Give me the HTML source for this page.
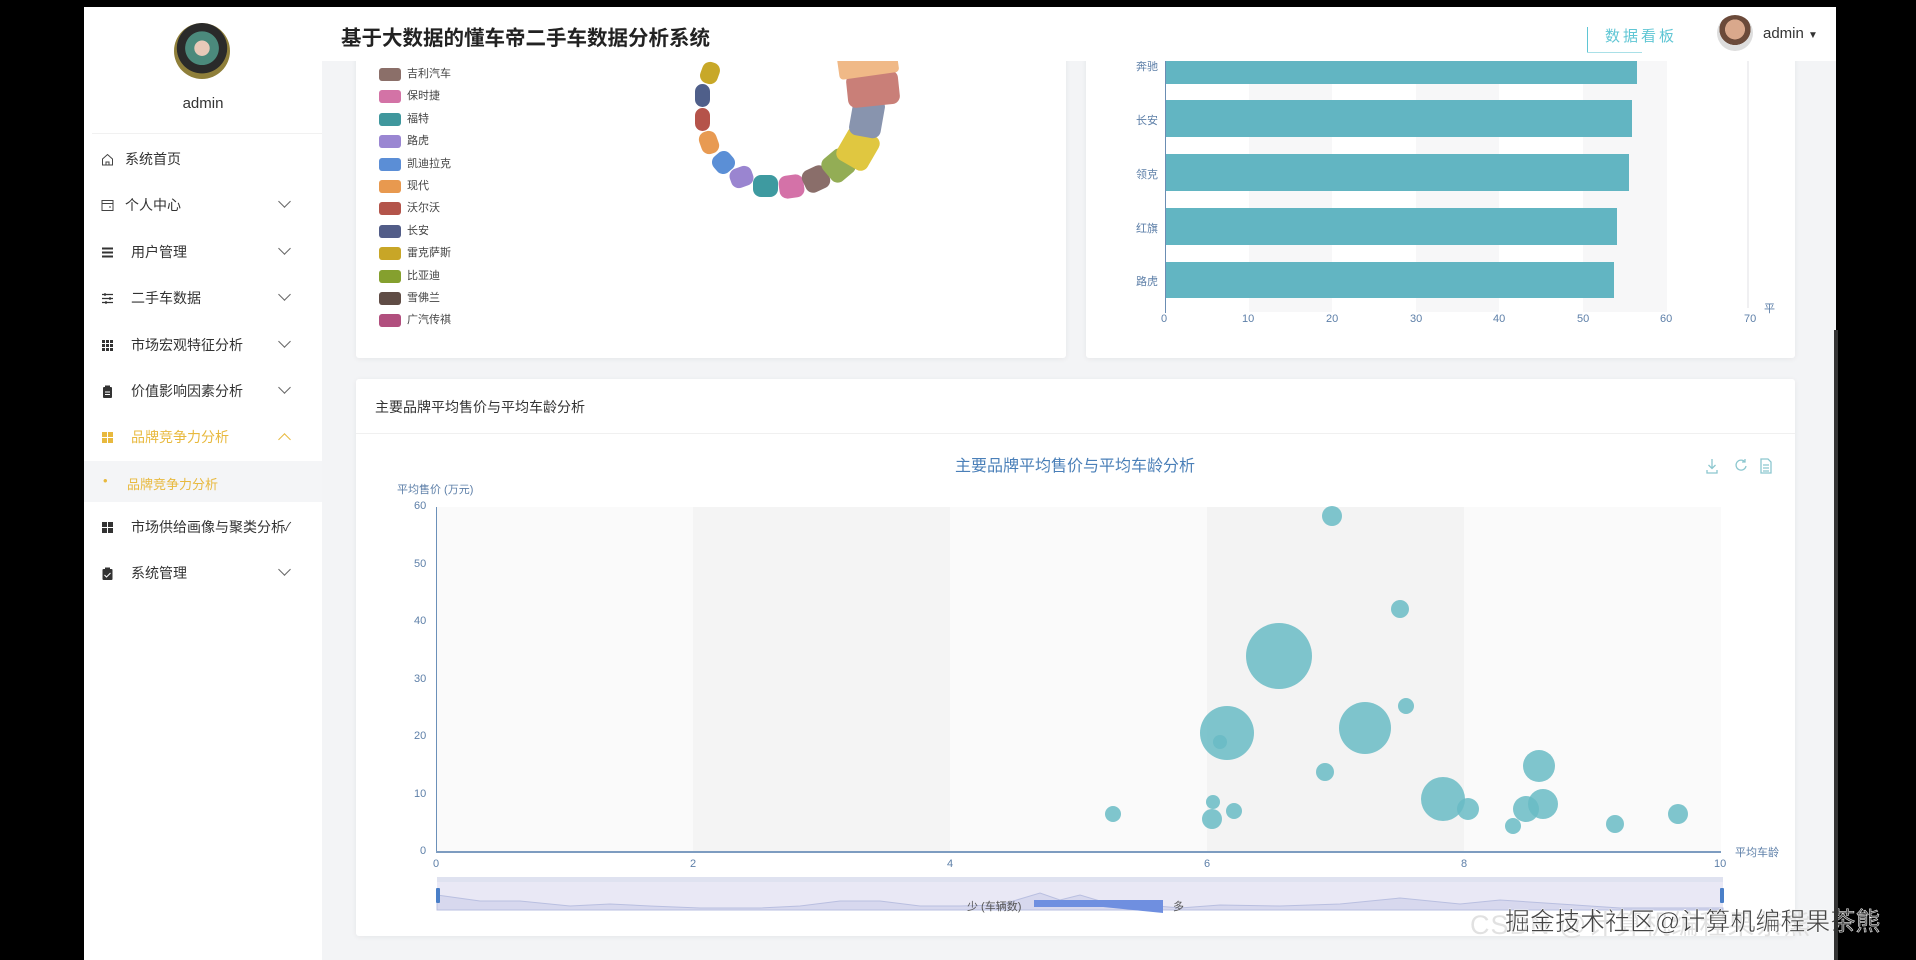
<!DOCTYPE html>
<html><head><meta charset="utf-8"><style>
*{margin:0;padding:0;box-sizing:border-box}
body{width:1916px;height:960px;background:#000;position:relative;overflow:hidden;font-family:"Liberation Sans","Noto Sans CJK SC",sans-serif;color:#333}
.abs{position:absolute}
.side{left:84px;top:7px;width:238px;height:953px;background:#fff}
.main{left:322px;top:7px;width:1514px;height:953px;background:#f3f4f6}
.card{position:absolute;background:#fff;box-shadow:0 1px 6px rgba(0,0,0,.06);border-radius:3px}
.mi{position:absolute;left:0;width:238px;font-size:14px;color:#333;height:40px;line-height:40px}
.mi .ic{position:absolute;left:17px;top:14px;width:13px;height:13px}
.mi .t{position:absolute;left:47px}
.mi .ar{position:absolute;left:196px;top:12px;width:9px;height:9px;border-right:1.3px solid #666;border-bottom:1.3px solid #666;transform:rotate(45deg)}
.lg{position:absolute;left:379px;font-size:11px;color:#444}
.lg i{display:inline-block;width:22px;height:13px;border-radius:3px;vertical-align:middle;margin-right:6px}
.seg{position:absolute;border-radius:8px}
.ax{position:absolute;font-size:11px;color:#5d7fa8}
</style></head><body>
<div class="abs main"></div>
<div class="abs side"></div>

<div class="card" style="left:356px;top:40px;width:710px;height:318px"></div>
<div class="card" style="left:1086px;top:40px;width:709px;height:318px"></div>

<div class="lg" style="top:65px"><i style="background:#8b6f69"></i>吉利汽车</div>
<div class="lg" style="top:87px"><i style="background:#d373a6"></i>保时捷</div>
<div class="lg" style="top:110px"><i style="background:#3f979d"></i>福特</div>
<div class="lg" style="top:132px"><i style="background:#9a86d2"></i>路虎</div>
<div class="lg" style="top:155px"><i style="background:#5b8ed6"></i>凯迪拉克</div>
<div class="lg" style="top:177px"><i style="background:#e8994f"></i>现代</div>
<div class="lg" style="top:199px"><i style="background:#b3544a"></i>沃尔沃</div>
<div class="lg" style="top:222px"><i style="background:#525d88"></i>长安</div>
<div class="lg" style="top:244px"><i style="background:#c8a627"></i>雷克萨斯</div>
<div class="lg" style="top:267px"><i style="background:#85a02e"></i>比亚迪</div>
<div class="lg" style="top:289px"><i style="background:#5f4c45"></i>雪佛兰</div>
<div class="lg" style="top:311px"><i style="background:#b14f7e"></i>广汽传祺</div>

<div class="seg" style="left:701px;top:62px;width:18px;height:22px;background:#c8a828;transform:rotate(20deg)"></div>
<div class="seg" style="left:695px;top:84px;width:15px;height:23px;background:#4f5f8a"></div>
<div class="seg" style="left:695px;top:108px;width:15px;height:23px;background:#b5534a"></div>
<div class="seg" style="left:700px;top:131px;width:18px;height:23px;background:#e89a52;transform:rotate(-20deg)"></div>
<div class="seg" style="left:713px;top:152px;width:21px;height:21px;background:#5b8fd6;transform:rotate(-40deg)"></div>
<div class="seg" style="left:730px;top:167px;width:23px;height:20px;background:#9a85d0;transform:rotate(-20deg)"></div>
<div class="seg" style="left:753px;top:175px;width:25px;height:22px;background:#3e9aa0"></div>
<div class="seg" style="left:779px;top:175px;width:25px;height:23px;background:#d472a8;transform:rotate(-8deg)"></div>
<div class="seg" style="left:803px;top:167px;width:26px;height:24px;background:#8a6e6a;transform:rotate(-25deg)"></div>
<div class="seg" style="left:824px;top:151px;width:29px;height:29px;background:#93ad55;transform:rotate(-40deg)"></div>
<div class="seg" style="left:839px;top:131px;width:38px;height:35px;background:#e0c740;transform:rotate(-60deg)"></div>
<div class="seg" style="left:847px;top:101px;width:40px;height:32px;background:#8894ae;transform:rotate(-80deg)"></div>
<div class="seg" style="left:847px;top:72px;width:52px;height:34px;background:#c97f78;transform:rotate(-6deg)"></div>
<div class="seg" style="left:838px;top:52px;width:60px;height:24px;background:#f0b987;transform:rotate(-8deg);border-radius:4px"></div>

<div class="abs" style="left:1165px;top:55px;width:585px;height:257px">
 <div class="abs" style="left:84px;top:0;width:83px;height:257px;background:#f7f7f8"></div>
 <div class="abs" style="left:251px;top:0;width:83px;height:257px;background:#f7f7f8"></div>
 <div class="abs" style="left:418px;top:0;width:84px;height:257px;background:#f7f7f8"></div>
</div>
<div class="abs" style="left:1165px;top:55px;width:1px;height:258px;background:#6b8db3"></div>
<div class="abs" style="left:1166px;top:58px;width:471px;height:26px;background:#62b5c2"></div>
<div class="abs" style="left:1166px;top:100px;width:466px;height:37px;background:#62b5c2"></div>
<div class="abs" style="left:1166px;top:154px;width:463px;height:37px;background:#62b5c2"></div>
<div class="abs" style="left:1166px;top:208px;width:451px;height:37px;background:#62b5c2"></div>
<div class="abs" style="left:1166px;top:262px;width:448px;height:36px;background:#62b5c2"></div>
<div class="ax" style="left:1136px;top:58px">奔驰</div>
<div class="ax" style="left:1136px;top:112px">长安</div>
<div class="ax" style="left:1136px;top:166px">领克</div>
<div class="ax" style="left:1136px;top:220px">红旗</div>
<div class="ax" style="left:1136px;top:273px">路虎</div>
<div class="ax" style="left:1161px;top:313px">0</div>
<div class="ax" style="left:1242px;top:313px">10</div>
<div class="ax" style="left:1326px;top:313px">20</div>
<div class="ax" style="left:1410px;top:313px">30</div>
<div class="ax" style="left:1493px;top:313px">40</div>
<div class="ax" style="left:1577px;top:313px">50</div>
<div class="ax" style="left:1660px;top:313px">60</div>
<div class="ax" style="left:1744px;top:313px">70</div>
<div class="abs" style="left:1747px;top:58px;width:2px;height:250px;background:#f0f0f2"></div>
<div class="ax" style="left:1764px;top:300px">平</div>

<div class="abs" style="left:84px;top:7px;width:1752px;height:54px;background:#fff"></div>
<div class="abs" style="left:341px;top:21px;font-size:20.5px;font-weight:bold;color:#222">基于大数据的懂车帝二手车数据分析系统</div>
<div class="abs" style="left:1587px;top:27px;width:1px;height:26px;background:#5fc6d4"></div>
<div class="abs" style="left:1587px;top:52px;width:55px;height:1px;background:#a9e0e7"></div>
<div class="abs" style="left:1605px;top:25px;font-size:15px;color:#5fc6d4;letter-spacing:3px">数据看板</div>
<div class="abs" style="left:1717px;top:15px;width:36px;height:36px;border-radius:50%;background:radial-gradient(circle at 50% 40%,#d9a88c 0 35%,#6b4a3a 36% 55%,#ddd 56%)"></div>
<div class="abs" style="left:1763px;top:25px;font-size:15px;color:#333">admin <span style="font-size:10px">▼</span></div>

<div class="abs" style="left:174px;top:23px;width:56px;height:56px;border-radius:50%;background:radial-gradient(circle at 50% 45%,#e8c9b8 0 18%,#4b8a7c 19% 40%,#2a2a2a 41% 60%,#8f7f3a 61%)"></div>
<div class="abs" style="left:84px;top:95px;width:238px;text-align:center;font-size:15px;color:#333">admin</div>
<div class="abs" style="left:92px;top:133px;width:230px;height:1px;background:#f1f1f1"></div>
<div class="mi" style="top:139px;left:84px"><svg class="ic" viewBox="0 0 13 13"><path d="M1.5 6 6.5 1.5 11.5 6V12H1.5Z M5 12V9h3v3" fill="none" stroke="#444" stroke-width="1"/></svg><span class="t" style="left:41px">系统首页</span></div>
<div class="mi" style="top:185px;left:84px"><svg class="ic" viewBox="0 0 13 13"><rect x="1" y="1.5" width="11" height="10" fill="none" stroke="#444"/><path d="M1 4.5h11M8 8h2" stroke="#444"/></svg><span class="t" style="left:41px">个人中心</span><i class="ar"></i></div>
<div class="mi" style="top:232px;left:84px"><svg class="ic" viewBox="0 0 13 13"><path d="M1 2.5h11M1 6.5h11M1 10.5h11" stroke="#333" stroke-width="2"/></svg><span class="t">用户管理</span><i class="ar"></i></div>
<div class="mi" style="top:278px;left:84px"><svg class="ic" viewBox="0 0 13 13"><path d="M1 2.5h11M1 6.5h11M1 10.5h11M4 1v3M9 5v3M5 9v3" stroke="#333" stroke-width="1.2"/></svg><span class="t">二手车数据</span><i class="ar"></i></div>
<div class="mi" style="top:325px;left:84px"><svg class="ic" viewBox="0 0 13 13"><path d="M1 1h3v3H1zM5 1h3v3H5zM9 1h3v3H9zM1 5h3v3H1zM5 5h3v3H5zM9 5h3v3H9zM1 9h3v3H1zM5 9h3v3H5zM9 9h3v3H9z" fill="#333"/></svg><span class="t">市场宏观特征分析</span><i class="ar"></i></div>
<div class="mi" style="top:371px;left:84px"><svg class="ic" viewBox="0 0 13 13"><rect x="2" y="2" width="9" height="11" rx="1" fill="#333"/><rect x="4" y="0.5" width="5" height="3" fill="#333"/><path d="M4 7h5M4 9.5h5" stroke="#fff"/></svg><span class="t">价值影响因素分析</span><i class="ar"></i></div>
<div class="mi" style="top:417px;left:84px;color:#e8b93e"><svg class="ic" viewBox="0 0 13 13"><path d="M1 1h5v5H1zM7 1h5v5H7zM1 7h5v5H1zM7 7h5v5H7z" fill="#e8b93e"/></svg><span class="t">品牌竞争力分析</span><i class="ar" style="transform:rotate(-135deg);top:18px;border-color:#e8b93e"></i></div>
<div class="abs" style="left:84px;top:461px;width:238px;height:41px;background:#f4f5f7"></div>
<div class="abs" style="left:103px;top:473px;font-size:13px;color:#e8b93e">•</div>
<div class="abs" style="left:127px;top:474px;font-size:13px;color:#e8b93e">品牌竞争力分析</div>
<div class="mi" style="top:507px;left:84px"><svg class="ic" viewBox="0 0 13 13"><path d="M1 1h5v5H1zM7 1h5v5H7zM1 7h5v5H1zM7 7h5v5H7z" fill="#333"/></svg><span class="t">市场供给画像与聚类分析</span><span class="abs" style="left:199px;font-size:12px">✓</span></div>
<div class="mi" style="top:553px;left:84px"><svg class="ic" viewBox="0 0 13 13"><rect x="1.5" y="2" width="10" height="11" rx="1" fill="#333"/><rect x="4" y="0.5" width="5" height="3" fill="#333"/><path d="M3.5 8l2 2 4-4" stroke="#fff" fill="none"/></svg><span class="t">系统管理</span><i class="ar"></i></div>

<div class="card" style="left:356px;top:379px;width:1439px;height:557px"></div>
<div class="abs" style="left:375px;top:397px;font-size:14px;color:#333">主要品牌平均售价与平均车龄分析</div>
<div class="abs" style="left:356px;top:433px;width:1439px;height:1px;background:#f0f0f0"></div>
<div class="abs" style="left:0;top:452px;width:2150px;text-align:center;font-size:16px;color:#4a7fb8">主要品牌平均售价与平均车龄分析</div>
<svg class="abs" style="left:1705px;top:457px" width="72" height="18" viewBox="0 0 72 18"><g fill="none" stroke="#8cc7cf" stroke-width="1.3"><path d="M7 2v9M3.5 8 7 11.5 10.5 8M2 13v3h10v-3"/><path d="M40 5a5 5 0 1 0 1 4M40 2v3h-3"/><path d="M56 2h7l3 3v11h-10zM58 8h6M58 11h6M58 14h6"/></g></svg>
<div class="ax" style="left:397px;top:481px">平均售价 (万元)</div>

<div class="abs" style="left:436px;top:507px;width:1285px;height:345px;background:linear-gradient(90deg,#fafafa 0 257px,#f4f4f4 257px 514px,#fafafa 514px 771px,#f3f3f3 771px 1028px,#fafafa 1028px)"></div>
<div class="abs" style="left:436px;top:507px;width:1px;height:345px;background:#6b90b9"></div>
<div class="abs" style="left:436px;top:851px;width:1285px;height:2px;background:#7d9cc0"></div>
<div class="ax" style="left:414px;top:500px">60</div>
<div class="ax" style="left:414px;top:558px">50</div>
<div class="ax" style="left:414px;top:615px">40</div>
<div class="ax" style="left:414px;top:673px">30</div>
<div class="ax" style="left:414px;top:730px">20</div>
<div class="ax" style="left:414px;top:788px">10</div>
<div class="ax" style="left:420px;top:845px">0</div>
<div class="ax" style="left:433px;top:858px">0</div>
<div class="ax" style="left:690px;top:858px">2</div>
<div class="ax" style="left:947px;top:858px">4</div>
<div class="ax" style="left:1204px;top:858px">6</div>
<div class="ax" style="left:1461px;top:858px">8</div>
<div class="ax" style="left:1714px;top:858px">10</div>
<div class="ax" style="left:1735px;top:844px">平均车龄</div>

<svg class="abs" style="left:0;top:0" width="1916" height="960"><g fill="#68bbc4" fill-opacity="0.85">
<circle cx="1332" cy="516" r="10"/><circle cx="1400" cy="609" r="9"/><circle cx="1279" cy="656" r="33"/><circle cx="1227" cy="733" r="27"/><circle cx="1220" cy="742" r="7"/><circle cx="1365" cy="728" r="26"/><circle cx="1406" cy="706" r="8"/><circle cx="1325" cy="772" r="9"/><circle cx="1113" cy="814" r="8"/><circle cx="1213" cy="802" r="7"/><circle cx="1212" cy="819" r="10"/><circle cx="1234" cy="811" r="8"/><circle cx="1443" cy="799" r="22"/><circle cx="1468" cy="809" r="11"/><circle cx="1539" cy="766" r="16"/><circle cx="1526" cy="809" r="13"/><circle cx="1543" cy="804" r="15"/><circle cx="1513" cy="826" r="8"/><circle cx="1615" cy="824" r="9"/><circle cx="1678" cy="814" r="10"/></g>
<rect x="437" y="877" width="1286" height="33" fill="#e9e8f5"/>
<rect x="437" y="877" width="1286" height="5" fill="#dfe2f0"/>
<path d="M437 895 L480 901 L520 901 L570 906 L610 904 L650 906 L700 908 L760 908 L800 906 L840 901 L880 901 L920 906 L960 906 L1000 905 L1040 893 L1060 900 L1080 895 L1100 901 L1180 908 L1220 905 L1280 906 L1340 904 L1400 898 L1460 904 L1500 900 L1560 904 L1620 908 L1723 908 V910 H437Z" fill="#d7d8ee" stroke="#b9bfe0"/>
<rect x="436" y="888" width="4" height="15" rx="1" fill="#4a7fc8"/><rect x="1720" y="888" width="4" height="15" rx="1" fill="#4a7fc8"/>
<path d="M1034 900 H1163 V913 Z" fill="#6f8fe0"/><rect x="1034" y="900" width="129" height="7" fill="#6f8fe0"/>
</svg>
<div class="abs" style="left:967px;top:898px;font-size:11px;color:#555">少 (车辆数)</div>
<div class="abs" style="left:1173px;top:898px;font-size:11px;color:#555">多</div>

<div class="abs" style="left:1470px;top:903px;font-size:27px;color:rgba(220,220,220,0.85);letter-spacing:1px">CSDN @计算机编程果茶熊</div>
<div class="abs" style="left:1505px;top:902px;font-size:25px;color:#444;-webkit-text-stroke:0.5px #fff">掘金技术社区@计算机编程果茶熊</div>
<div class="abs" style="left:1834px;top:330px;width:4px;height:630px;background:#333"></div>
</body></html>
